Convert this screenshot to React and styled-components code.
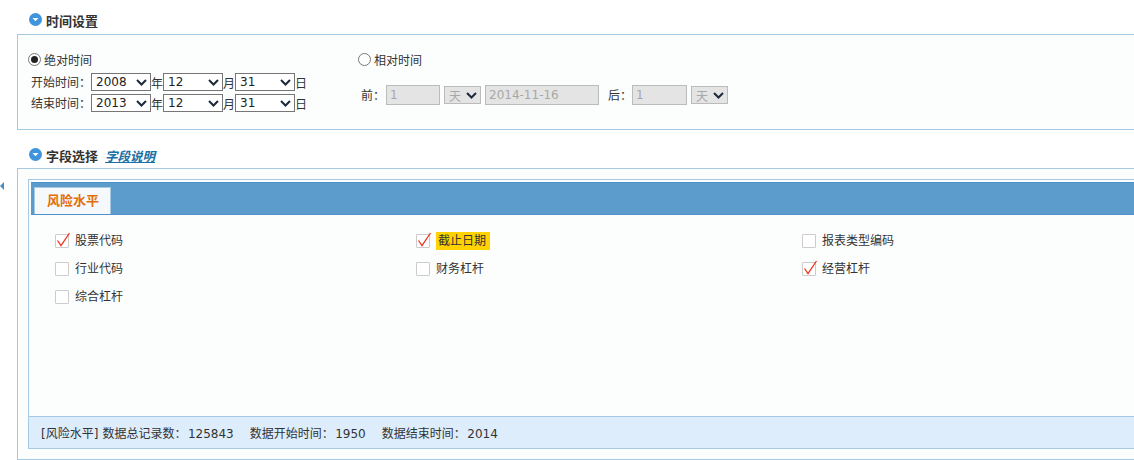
import React from "react";
import styled, { createGlobalStyle } from "styled-components";

const GlobalStyle = createGlobalStyle`
  html, body {
    margin: 0;
    padding: 0;
    background: #fff;
    overflow: hidden;
  }
  body {
    font-family: "DejaVu Sans", "Noto Sans CJK SC", sans-serif;
    font-size: 12px;
    color: #333;
  }
  #root {
    width: 1134px;
    height: 460px;
    overflow: hidden;
  }
`;

const fields = [
  { name: "股票代码", checked: true },
  { name: "截止日期", checked: true, highlight: true },
  { name: "报表类型编码" },
  { name: "行业代码" },
  { name: "财务杠杆" },
  { name: "经营杠杆", checked: true },
  { name: "综合杠杆" },
];

const Chevron = () => (
  <ChevronSvg viewBox="0 0 11 7">
    <path d="M1 1l4.5 4.5L10 1" fill="none" stroke="currentColor" strokeWidth="2" />
  </ChevronSvg>
);

const Select = ({ value, width, disabled }) => (
  <SelectBox $width={width} $disabled={disabled}>
    <span>{value}</span>
    <Chevron />
  </SelectBox>
);

const DateRow = ({ label, year }) => (
  <Row>
    <RowLabel>{label}：</RowLabel>
    <Select value={year} width={60} />
    <Unit>年</Unit>
    <Select value="12" width={60} />
    <Unit>月</Unit>
    <Select value="31" width={60} />
    <Unit>日</Unit>
  </Row>
);

const SectionTitle = ({ children }) => (
  <TitleRow>
    <svg width="13" height="13" viewBox="0 0 13 13">
      <circle cx="6.5" cy="6.5" r="6.5" fill="#3f94dc" />
      <path d="M3.5 5h6l-3 3.2z" fill="#fff" />
    </svg>
    {children}
  </TitleRow>
);

const Field = ({ name, checked, highlight }) => (
  <FieldItem>
    <CheckBox>
      {checked && (
        <svg width="14" height="14" viewBox="0 0 14 14">
          <path d="M2.5 6.5l3.5 5L14.5 -1" fill="none" stroke="#f0331c" strokeWidth="1.3" />
        </svg>
      )}
    </CheckBox>
    <FieldName $highlight={highlight}>{name}</FieldName>
  </FieldItem>
);

export default function App() {
  return (
    <Page>
      <GlobalStyle />
      <SectionTitle>时间设置</SectionTitle>
      <TimePanel>
        <AbsoluteColumn>
          <RadioRow>
            <Radio $on />
            绝对时间
          </RadioRow>
          <DateRow label="开始时间" year="2008" />
          <DateRow label="结束时间" year="2013" />
        </AbsoluteColumn>
        <RelativeColumn>
          <RadioRow>
            <Radio />
            相对时间
          </RadioRow>
          <RelativeRow>
            <RowLabel>前：</RowLabel>
            <DisabledInput $width={54}>1</DisabledInput>
            <Select value="天" width={37} disabled />
            <DisabledInput $width={114}>2014-11-16</DisabledInput>
            <AfterLabel>后：</AfterLabel>
            <DisabledInput $width={55}>1</DisabledInput>
            <Select value="天" width={37} disabled />
          </RelativeRow>
        </RelativeColumn>
      </TimePanel>

      <FieldTitleWrap>
        <SectionTitle>
          字段选择
          <HelpLink>字段说明</HelpLink>
        </SectionTitle>
      </FieldTitleWrap>
      <FieldPanel>
        <CollapseArrow />
        <InnerPanel>
          <TabBar>
            <Tab>风险水平</Tab>
          </TabBar>
          <FieldGrid>
            {fields.map((f) => (
              <Field key={f.name} {...f} />
            ))}
          </FieldGrid>
          <Footer>
            <span>[风险水平]</span>
            <span>
              数据总记录数：<FooterNumber>125843</FooterNumber>
            </span>
            <FooterGap>
              数据开始时间：<FooterNumber>1950</FooterNumber>
            </FooterGap>
            <FooterGap>
              数据结束时间：<FooterNumber>2014</FooterNumber>
            </FooterGap>
          </Footer>
        </InnerPanel>
      </FieldPanel>
    </Page>
  );
}

const Page = styled.div`
  width: 1200px;
  height: 460px;
  padding: 11px 0 0 17px;
  box-sizing: border-box;
  overflow: hidden;
`;

const TitleRow = styled.div`
  display: flex;
  align-items: center;
  gap: 4px;
  height: 18px;
  padding-left: 12px;
  font-size: 13px;
  font-weight: 700;
  color: #333;

  svg {
    position: relative;
    top: -1px;
  }
`;

const TimePanel = styled.div`
  display: flex;
  box-sizing: border-box;
  height: 96px;
  margin-top: 5px;
  padding: 16px 0 0 10px;
  background: #fcfefe;
  border: 1px solid #a6cae4;
`;

const AbsoluteColumn = styled.div`
  width: 330px;
`;

const RelativeColumn = styled.div`
  display: flex;
  flex-direction: column;
`;

const RadioRow = styled.label`
  display: flex;
  align-items: center;
  gap: 3px;
  box-sizing: border-box;
  height: 18px;
  padding-bottom: 2px;
  margin-bottom: 4px;
`;

const Radio = styled.span`
  display: inline-flex;
  align-items: center;
  justify-content: center;
  box-sizing: border-box;
  width: 13px;
  height: 13px;
  border-radius: 50%;
  border: 1px solid #777;
  background: #fff;

  &::after {
    content: "";
    display: ${(p) => (p.$on ? "block" : "none")};
    width: 7px;
    height: 7px;
    border-radius: 50%;
    background: #222;
  }
`;

const Row = styled.div`
  display: flex;
  align-items: center;
  height: 18px;
  margin-bottom: 3px;
  padding-left: 3px;
`;

const RowLabel = styled.span`
  width: 60px;
  padding-bottom: 2px;
  white-space: nowrap;
`;

const Unit = styled.span`
  width: 12px;
`;

const SelectBox = styled.div`
  display: flex;
  align-items: center;
  justify-content: space-between;
  box-sizing: border-box;
  width: ${(p) => p.$width}px;
  height: 18px;
  padding: 0 3px 0 4px;
  background: ${(p) => (p.$disabled ? "#e4e4e4" : "#fff")};
  border: 1px solid ${(p) => (p.$disabled ? "#bbb" : "#767676")};
  color: ${(p) => (p.$disabled ? "#a8a8a8" : "#222")};
`;

const ChevronSvg = styled.svg`
  width: 11px;
  height: 7px;
  color: #1c2a3a;
`;

const RelativeRow = styled.div`
  display: flex;
  align-items: center;
  gap: 4px;
  height: 20px;
  margin-top: 12px;
  padding-left: 3px;

  ${RowLabel} {
    width: 21px;
  }
`;

const AfterLabel = styled(RowLabel)`
  margin-left: 5px;

  ${RelativeRow} && {
    width: 20px;
  }
`;

const DisabledInput = styled.div`
  box-sizing: border-box;
  width: ${(p) => p.$width}px;
  height: 20px;
  line-height: 18px;
  padding-left: 3px;
  background: #e4e4e4;
  border: 1px solid #bbb;
  color: #a8a8a8;
`;

const FieldTitleWrap = styled.div`
  margin-top: 16px;
`;

const HelpLink = styled.a`
  margin-left: 3px;
  color: #1a6fa5;
  font-size: 12.5px;
  font-style: italic;
  text-decoration: underline;
`;

const FieldPanel = styled.div`
  position: relative;
  box-sizing: border-box;
  height: 292px;
  margin-top: 4px;
  padding: 10px 0 0 10px;
  background: #fcfefe;
  border: 1px solid #a6cae4;
`;

const CollapseArrow = styled.span`
  position: absolute;
  left: -18px;
  top: 13px;
  border-style: solid;
  border-width: 4px 4px 4px 0;
  border-color: transparent #4a8cc8 transparent transparent;
`;

const InnerPanel = styled.div`
  display: flex;
  flex-direction: column;
  box-sizing: border-box;
  height: 270px;
  padding-top: 2px;
  border: 1px solid #a6cae4;
  border-bottom: 0;
`;

const TabBar = styled.div`
  display: flex;
  align-items: flex-end;
  box-sizing: border-box;
  height: 33px;
  margin-left: 2px;
  padding-left: 3px;
  background: #5c9ccc;
  border-top: 1px solid #4d8fc8;
  border-bottom: 1px solid #4d8fc8;
`;

const Tab = styled.div`
  box-sizing: border-box;
  width: 77px;
  height: 27px;
  line-height: 25px;
  padding-left: 12px;
  background: #f5f9fb;
  border: 1px solid #a6cae4;
  border-bottom: 0;
  color: #e46d0a;
  font-size: 13px;
  font-weight: 700;
`;

const FieldGrid = styled.div`
  display: grid;
  grid-template-columns: 361px 386px 1fr;
  grid-auto-rows: 28px;
  flex: 1;
  align-content: start;
  padding: 12px 0 0 26px;
`;

const FieldItem = styled.label`
  display: flex;
  align-items: center;
  gap: 6px;
  height: 28px;
`;

const CheckBox = styled.span`
  display: inline-flex;
  box-sizing: border-box;
  width: 14px;
  height: 14px;
  margin-top: -1px;
  background: #fff;
  border: 1px solid #ccc;
  border-radius: 1px;

  svg {
    flex: none;
    margin: -1px;
    overflow: visible;
  }
`;

const FieldName = styled.span`
  height: 18px;
  line-height: 18px;
  padding: ${(p) => (p.$highlight ? "0 4px 0 2px" : "0")};
  background: ${(p) => (p.$highlight ? "#ffd200" : "transparent")};
`;

const Footer = styled.div`
  display: flex;
  align-items: center;
  gap: 4px;
  box-sizing: border-box;
  height: 33px;
  padding-left: 12px;
  background: #deedfb;
  border-top: 1px solid #a6cae4;
  border-bottom: 1px solid #a6cae4;
`;

const FooterGap = styled.span`
  margin-left: 12px;
`;

const FooterNumber = styled.span`
  margin-left: 1.5px;
`;
